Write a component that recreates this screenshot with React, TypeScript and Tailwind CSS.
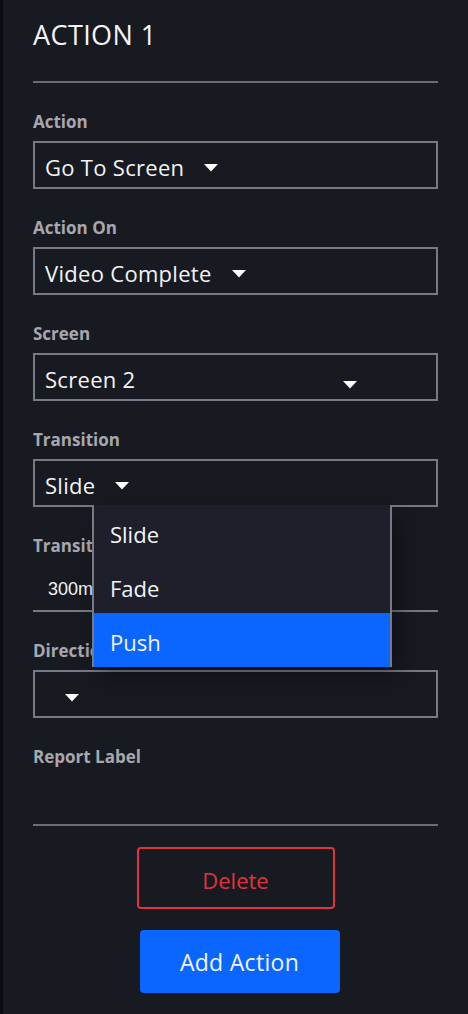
import React from "react";

const Caret = ({ className = "" }: { className?: string }) => (
  <svg width="14" height="8" viewBox="0 0 14 8" className={"shrink-0 " + className}>
    <polygon points="0,0 14,0 7,7.5" fill="#ffffff" />
  </svg>
);

const Label = ({ children }: { children: React.ReactNode }) => (
  <div className="h-6 leading-6 text-[17px] font-bold text-[#a7a8ad]">{children}</div>
);

function SelectBox({
  value,
  valueClass = "",
  caretClass = "",
  children,
}: {
  value: string;
  valueClass?: string;
  caretClass?: string;
  children?: React.ReactNode;
}) {
  return (
    <div className="relative mt-[7px] flex h-12 items-center border-2 border-[#777985] pl-[10px] pt-[5px]">
      <span className={"text-[22px] tracking-[0.3px] text-[#f4f4f6] " + valueClass}>{value}</span>
      <Caret className={"ml-5 " + caretClass} />
      {children}
    </div>
  );
}

export default function App() {
  return (
    <div
      className="min-h-screen w-full border-l-[3px] border-[#0b0c10] bg-[#181a22]"
      style={{ fontFamily: '"Open Sans", "Noto Sans", sans-serif' }}
    >
      <div className="pl-[30px] pr-[30px] pt-[17px]">
        <h1 className="text-[27px] leading-9 font-normal tracking-[0.4px] text-[#f4f4f6]">ACTION 1</h1>
        <div className="mt-[28px] h-[2px] bg-[#6a6c78]" />

        <div className="mt-[27px]">
          <Label>Action</Label>
          <SelectBox value="Go To Screen" />
        </div>

        <div className="mt-[27px]">
          <Label>Action On</Label>
          <SelectBox value="Video Complete" />
        </div>

        <div className="mt-[27px]">
          <Label>Screen</Label>
          <SelectBox value="Screen 2" valueClass="w-[278px]" caretClass="mt-[10px]" />
        </div>

        <div className="relative z-10 mt-[27px]">
          <Label>Transition</Label>
          <SelectBox value="Slide">
            <div className="absolute left-[57px] top-full w-[300px] border-x-2 border-[#777985] bg-[#1e1f2b] shadow-[8px_10px_22px_rgba(0,0,0,0.35)]">
              <div className="flex h-[54px] items-center pl-4 pt-[4px] text-[22px] text-[#f4f4f6]">Slide</div>
              <div className="flex h-[54px] items-center pl-4 pt-[4px] text-[22px] text-[#f4f4f6]">Fade</div>
              <div className="flex h-[54px] items-center bg-[#0a66ff] pl-4 pt-[4px] text-[22px] text-[#f4f4f6]">Push</div>
            </div>
          </SelectBox>
        </div>

        <div className="mt-[27px]">
          <Label>Transition Duration</Label>
          <div
            className="mt-[7px] flex h-[47px] items-center border-b-2 border-[#777985] pl-[15px] pt-[4px] text-[18px] text-[#f4f4f6]"
            style={{ fontFamily: '"Liberation Sans", Arial, sans-serif' }}
          >
            300ms
          </div>
        </div>

        <div className="mt-[27px]">
          <Label>Direction</Label>
          <SelectBox value="" caretClass="mt-[2px]" />
        </div>

        <div className="mt-[27px]">
          <Label>Report Label</Label>
          <div className="mt-[7px] h-12" />
        </div>

        <div className="h-[2px] bg-[#6a6c78]" />

        <div className="mt-[21px] flex flex-col items-center">
          <button className="flex h-[62px] w-[198px] items-center justify-center rounded-[4px] border-2 border-[#e2333c] pt-[4px] text-[22px] text-[#e2333c]">
            Delete
          </button>
          <button className="ml-[8px] mt-[21px] flex h-[63px] w-[200px] items-center justify-center rounded-[4px] bg-[#0a66ff] pt-[2px] text-[23px] tracking-[0.3px] text-[#f4f4f6]">
            Add Action
          </button>
        </div>
      </div>
    </div>
  );
}
